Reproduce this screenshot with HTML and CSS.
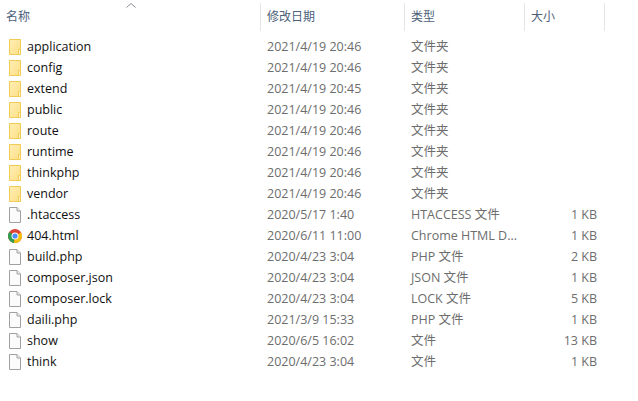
FILE: index.html
```html
<!DOCTYPE html>
<html lang="zh">
<head>
<meta charset="utf-8">
<title>文件列表</title>
<link rel="stylesheet" href="styles.css">
</head>
<body>
<svg class="defs" width="0" height="0" aria-hidden="true">
  <defs>
    <linearGradient id="fg" x1="0" y1="0" x2="1" y2="1">
      <stop offset="0" stop-color="#ffeeb5"/>
      <stop offset="1" stop-color="#fedf85"/>
    </linearGradient>
  </defs>
  <symbol id="folder" viewBox="0 0 14 16">
    <path d="M1.500.5H12.500V15.500H1.500Z" fill="url(#fg)" stroke="#f0cb55"/>
    <path d="M10.500 10.500H12.500V15.500H10.500Z" fill="#fff3c8" stroke="#f0cb55"/>
  </symbol>
  <symbol id="file" viewBox="0 0 14 16">
    <path d="M1.500.5H9L12.500 4V15.500H1.500Z" fill="#fbfbfb" stroke="#a0a0a0"/>
    <path d="M9 .5V4H12.500" fill="#eeeeee" stroke="#a0a0a0"/>
  </symbol>
  <symbol id="chrome" viewBox="0 0 14 16">
    <g transform="translate(0 1)">
      <circle cx="7" cy="7" r="7" fill="#db4437"/>
      <path d="M7 7 1.200 3.100A7 7 0 0 0 6 13.900Z" fill="#2e9e4f"/>
      <path d="M7 7 6 13.900A7 7 0 0 0 13.800 5.200L13 3.500Z" fill="#f4c20d"/>
      <circle cx="7" cy="7" r="3.500" fill="#fff"/>
      <circle cx="7" cy="7" r="2.600" fill="#4d8df5"/>
    </g>
  </symbol>
</svg>
<main class="list">
  <div class="head">
    <span class="sort"><svg width="10" height="5" viewBox="0 0 10 5"><path d="M.5 4.500 5 .5 9.500 4.500" fill="none" stroke="#8a8f96"/></svg></span>
    <div class="hcell c-name">名称</div>
    <div class="hcell c-date">修改日期</div>
    <div class="hcell c-type">类型</div>
    <div class="hcell c-size">大小</div>
  </div>
  <div class="rows">
    <div class="row"><div class="name"><svg class="ic"><use href="#folder"/></svg>application</div><div class="date">2021/4/19 20:46</div><div class="type">文件夹</div><div class="size"></div></div>
    <div class="row"><div class="name"><svg class="ic"><use href="#folder"/></svg>config</div><div class="date">2021/4/19 20:46</div><div class="type">文件夹</div><div class="size"></div></div>
    <div class="row"><div class="name"><svg class="ic"><use href="#folder"/></svg>extend</div><div class="date">2021/4/19 20:45</div><div class="type">文件夹</div><div class="size"></div></div>
    <div class="row"><div class="name"><svg class="ic"><use href="#folder"/></svg>public</div><div class="date">2021/4/19 20:46</div><div class="type">文件夹</div><div class="size"></div></div>
    <div class="row"><div class="name"><svg class="ic"><use href="#folder"/></svg>route</div><div class="date">2021/4/19 20:46</div><div class="type">文件夹</div><div class="size"></div></div>
    <div class="row"><div class="name"><svg class="ic"><use href="#folder"/></svg>runtime</div><div class="date">2021/4/19 20:46</div><div class="type">文件夹</div><div class="size"></div></div>
    <div class="row"><div class="name"><svg class="ic"><use href="#folder"/></svg>thinkphp</div><div class="date">2021/4/19 20:46</div><div class="type">文件夹</div><div class="size"></div></div>
    <div class="row"><div class="name"><svg class="ic"><use href="#folder"/></svg>vendor</div><div class="date">2021/4/19 20:46</div><div class="type">文件夹</div><div class="size"></div></div>
    <div class="row"><div class="name"><svg class="ic"><use href="#file"/></svg>.htaccess</div><div class="date">2020/5/17 1:40</div><div class="type">HTACCESS 文件</div><div class="size">1 KB</div></div>
    <div class="row"><div class="name"><svg class="ic"><use href="#chrome"/></svg>404.html</div><div class="date">2020/6/11 11:00</div><div class="type">Chrome HTML D...</div><div class="size">1 KB</div></div>
    <div class="row"><div class="name"><svg class="ic"><use href="#file"/></svg>build.php</div><div class="date">2020/4/23 3:04</div><div class="type">PHP 文件</div><div class="size">2 KB</div></div>
    <div class="row"><div class="name"><svg class="ic"><use href="#file"/></svg>composer.json</div><div class="date">2020/4/23 3:04</div><div class="type">JSON 文件</div><div class="size">1 KB</div></div>
    <div class="row"><div class="name"><svg class="ic"><use href="#file"/></svg>composer.lock</div><div class="date">2020/4/23 3:04</div><div class="type">LOCK 文件</div><div class="size">5 KB</div></div>
    <div class="row"><div class="name"><svg class="ic"><use href="#file"/></svg>daili.php</div><div class="date">2021/3/9 15:33</div><div class="type">PHP 文件</div><div class="size">1 KB</div></div>
    <div class="row"><div class="name"><svg class="ic"><use href="#file"/></svg>show</div><div class="date">2020/6/5 16:02</div><div class="type">文件</div><div class="size">13 KB</div></div>
    <div class="row"><div class="name"><svg class="ic"><use href="#file"/></svg>think</div><div class="date">2020/4/23 3:04</div><div class="type">文件</div><div class="size">1 KB</div></div>
  </div>
</main>
</body>
</html>
```
FILE: styles.css
```css
* { box-sizing: border-box; }
html, body { margin: 0; padding: 0; background: #fff; }
body {
  width: 638px;
  height: 401px;
  overflow: hidden;
  font: 12.5px/21px "Open Sans", "Noto Sans CJK SC", sans-serif;
  color: #6d6d6d;
}
.defs { display: block; height: 0; }
.list { padding-top: 3px; }
.head {
  position: relative;
  display: grid;
  grid-template-columns: 260px 144px 120px 81px;
  height: 27px;
  margin-bottom: 6px;
  font-size: 12px;
  color: #4c607a;
}
.sort { position: absolute; left: 126px; top: 0; line-height: 0; }
.hcell { padding-left: 6px; line-height: 28px; }
.c-date, .c-type, .c-size { border-left: 1px solid #e5e5e5; }
.c-size { border-right: 1px solid #e5e5e5; }
.row {
  display: grid;
  grid-template-columns: 260px 144px 120px 80px;
  height: 21px;
}
.name { display: flex; align-items: center; color: #101010; padding-left: 8px; }
.ic { width: 14px; height: 16px; margin-right: 5px; flex: none; }
.date { padding-left: 7px; }
.type { padding-left: 7px; }
.size { text-align: right; padding-right: 7px; }
```
